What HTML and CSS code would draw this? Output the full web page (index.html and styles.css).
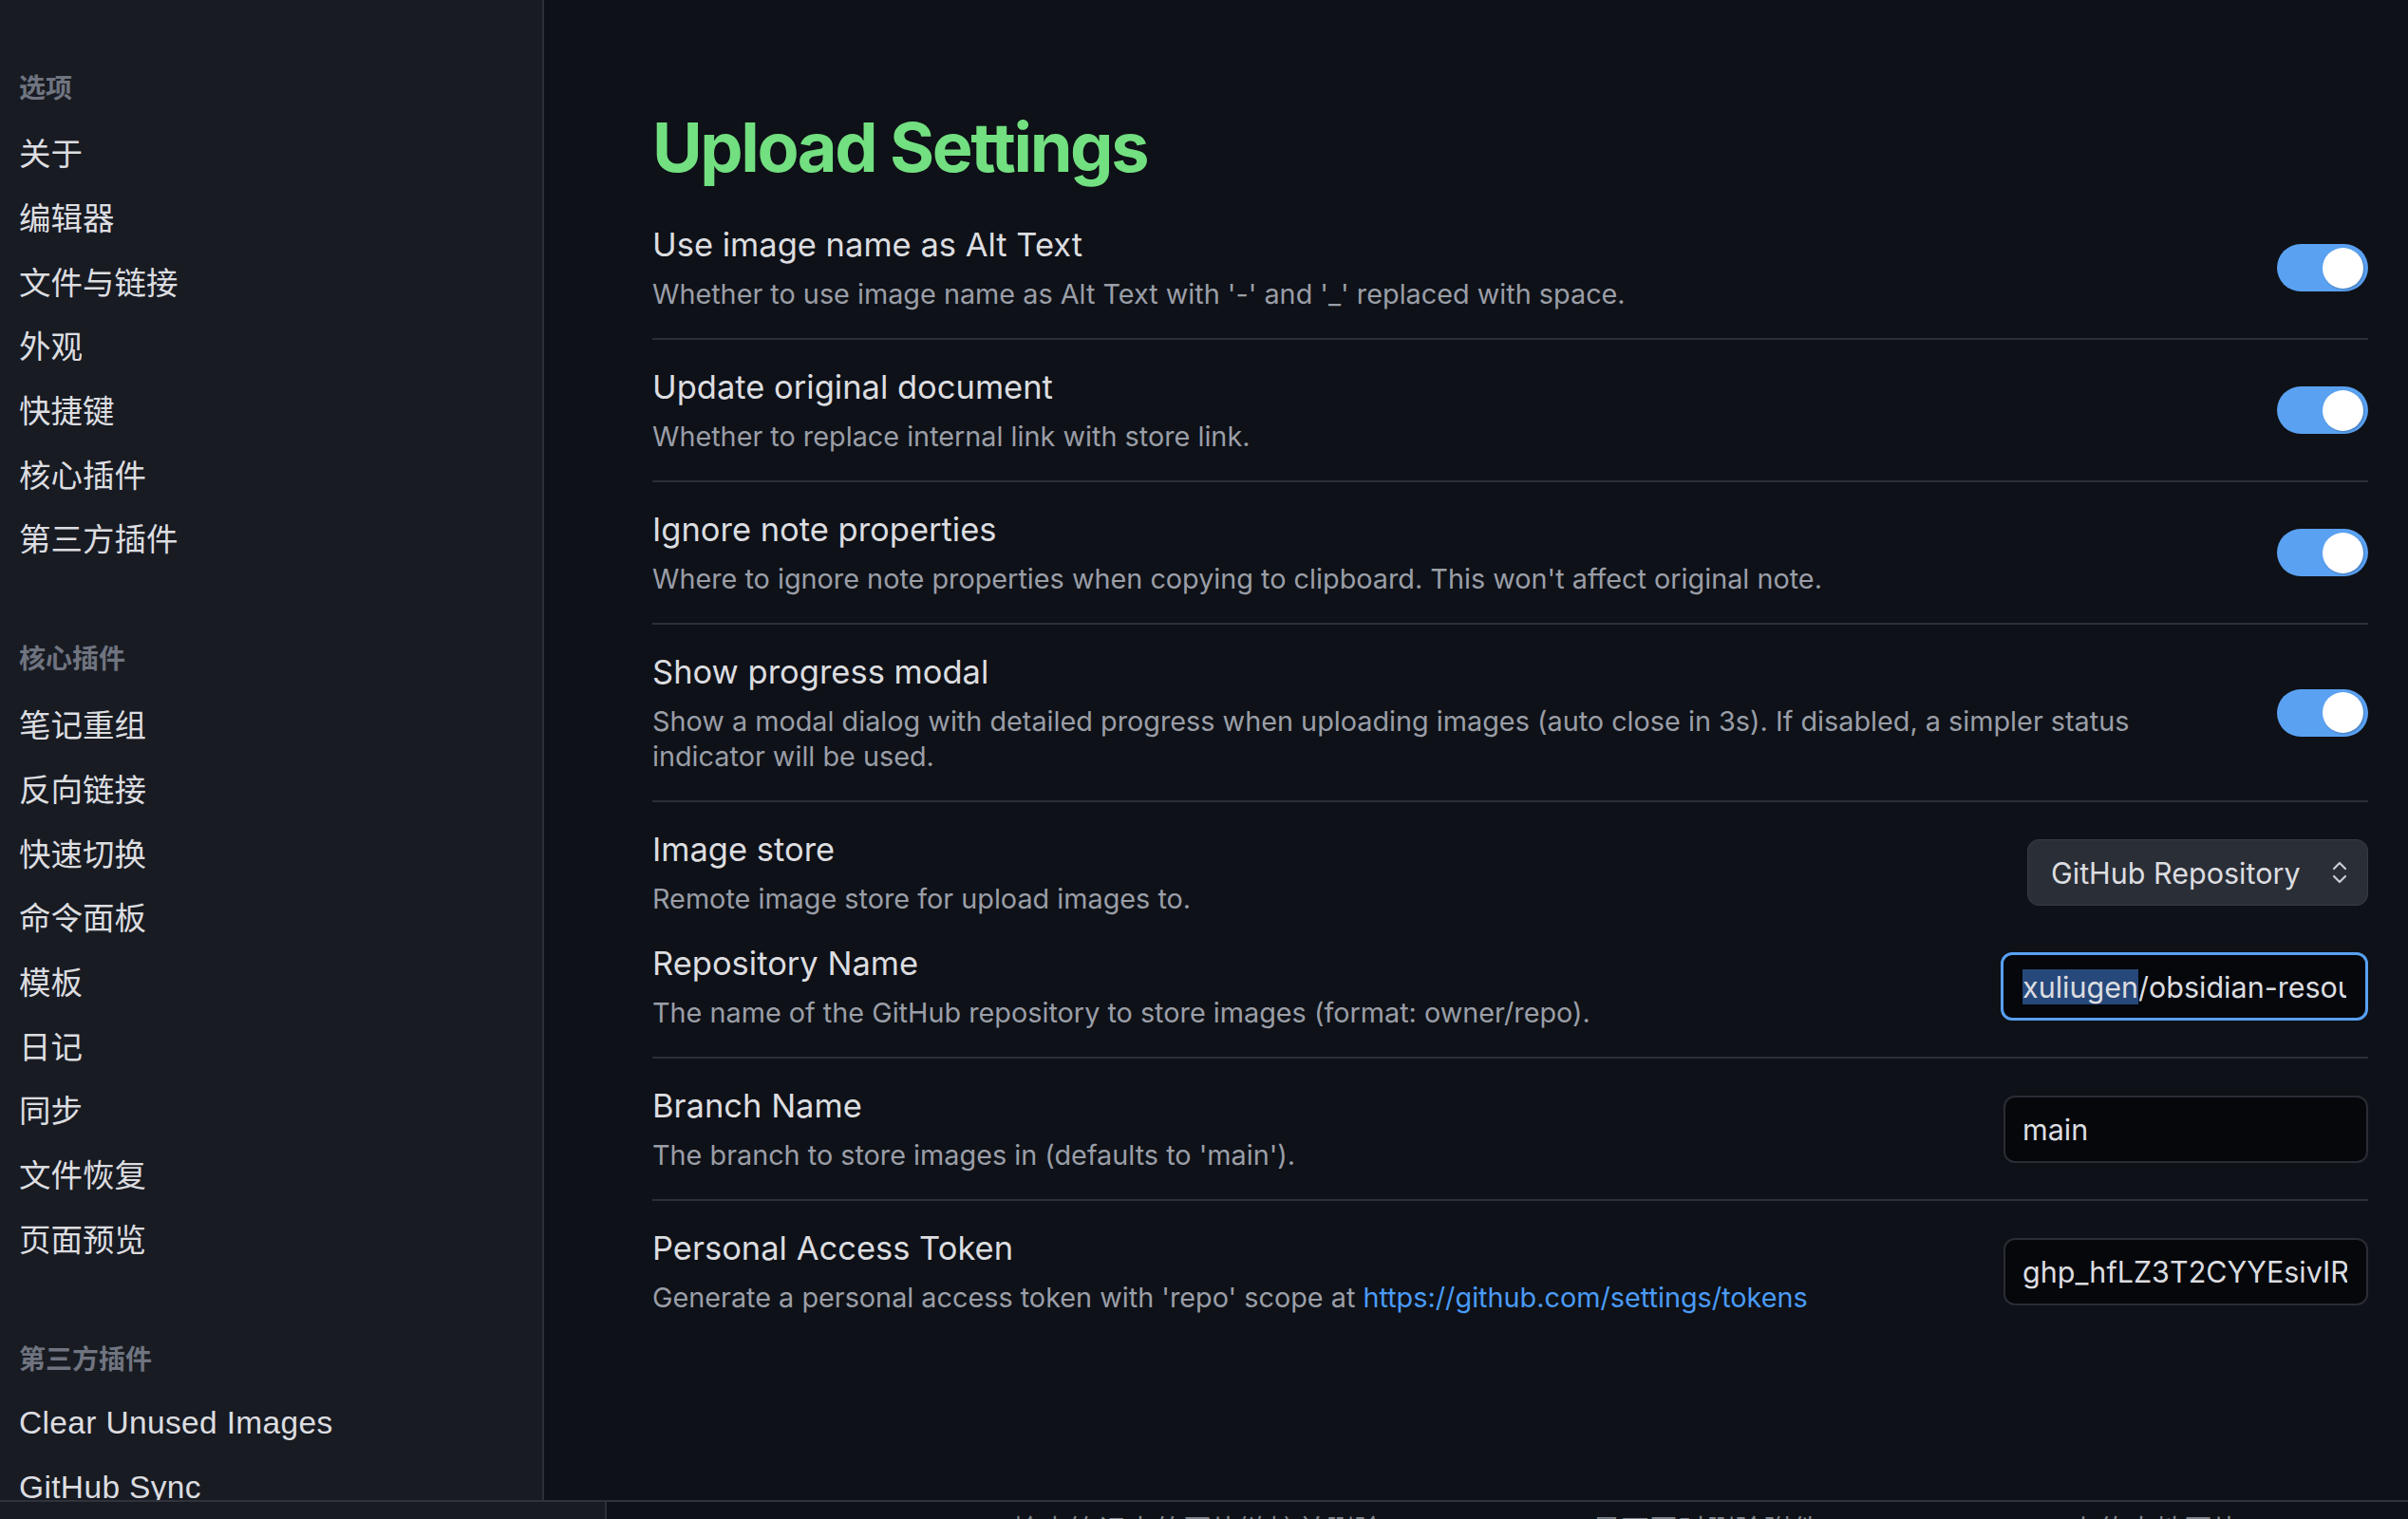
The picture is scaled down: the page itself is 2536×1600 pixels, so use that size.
FILE: index.html
```html
<!DOCTYPE html>
<html lang="zh">
<head>
<meta charset="utf-8">
<title>Upload Settings</title>
<link rel="stylesheet" href="styles.css">
</head>
<body>
<div class="app">
  <nav class="sidebar">
    <div class="group">
      <div class="group-title">选项</div>
      <div class="nav-item">关于</div>
      <div class="nav-item">编辑器</div>
      <div class="nav-item">文件与链接</div>
      <div class="nav-item">外观</div>
      <div class="nav-item">快捷键</div>
      <div class="nav-item">核心插件</div>
      <div class="nav-item">第三方插件</div>
    </div>
    <div class="group">
      <div class="group-title">核心插件</div>
      <div class="nav-item">笔记重组</div>
      <div class="nav-item">反向链接</div>
      <div class="nav-item">快速切换</div>
      <div class="nav-item">命令面板</div>
      <div class="nav-item">模板</div>
      <div class="nav-item">日记</div>
      <div class="nav-item">同步</div>
      <div class="nav-item">文件恢复</div>
      <div class="nav-item">页面预览</div>
    </div>
    <div class="group">
      <div class="group-title">第三方插件</div>
      <div class="nav-item latin">Clear Unused Images</div>
      <div class="nav-item latin">GitHub Sync</div>
    </div>
  </nav>
  <main class="content">
    <h1 class="heading">Upload Settings</h1>
    <div class="setting">
      <div class="info">
        <div class="name">Use image name as Alt Text</div>
        <div class="desc">Whether to use image name as Alt Text with '-' and '_' replaced with space.</div>
      </div>
      <div class="control"><div class="toggle"><div class="knob"></div></div></div>
    </div>
    <div class="setting bordered">
      <div class="info">
        <div class="name">Update original document</div>
        <div class="desc">Whether to replace internal link with store link.</div>
      </div>
      <div class="control"><div class="toggle"><div class="knob"></div></div></div>
    </div>
    <div class="setting bordered">
      <div class="info">
        <div class="name">Ignore note properties</div>
        <div class="desc">Where to ignore note properties when copying to clipboard. This won't affect original note.</div>
      </div>
      <div class="control"><div class="toggle"><div class="knob"></div></div></div>
    </div>
    <div class="setting bordered">
      <div class="info">
        <div class="name">Show progress modal</div>
        <div class="desc">Show a modal dialog with detailed progress when uploading images (auto close in 3s). If disabled, a simpler status indicator will be used.</div>
      </div>
      <div class="control"><div class="toggle"><div class="knob"></div></div></div>
    </div>
    <div class="setting bordered no-bottom">
      <div class="info">
        <div class="name">Image store</div>
        <div class="desc">Remote image store for upload images to.</div>
      </div>
      <div class="control">
        <div class="dropdown">
          <span>GitHub Repository</span>
          <svg class="chevrons" width="22" height="26" viewBox="0 0 22 26" fill="none" stroke="#c9ccd2" stroke-width="2.2" stroke-linecap="round" stroke-linejoin="round"><path d="M5 9 L11 3 L17 9"/><path d="M5 17 L11 23 L17 17"/></svg>
        </div>
      </div>
    </div>
    <div class="setting">
      <div class="info">
        <div class="name">Repository Name</div>
        <div class="desc">The name of the GitHub repository to store images (format: owner/repo).</div>
      </div>
      <div class="control">
        <div class="textbox focused"><span class="value"><span class="sel">xuliugen</span>/obsidian-resources</span></div>
      </div>
    </div>
    <div class="setting bordered">
      <div class="info">
        <div class="name">Branch Name</div>
        <div class="desc">The branch to store images in (defaults to 'main').</div>
      </div>
      <div class="control">
        <div class="textbox"><span class="value">main</span></div>
      </div>
    </div>
    <div class="setting bordered">
      <div class="info">
        <div class="name">Personal Access Token</div>
        <div class="desc">Generate a personal access token with 'repo' scope at <a class="link" href="#">https://github.com/settings/tokens</a></div>
      </div>
      <div class="control">
        <div class="textbox"><span class="value">ghp_hfLZ3T2CYYEsivIRq8Xw2mPz</span></div>
      </div>
    </div>
  </main>
</div>
<footer class="statusbar">
  <div class="status-left"></div>
  <div class="status-right">
    <span class="status-text s1">检查笔记中的图片链接并删除</span>
    <span class="status-text s2">是否同时删除附件</span>
    <span class="status-text s3">上传本地图片</span>
  </div>
</footer>
</body>
</html>
```

FILE: styles.css
```css
* {
  box-sizing: border-box;
}

html, body {
  margin: 0;
  padding: 0;
  height: 1600px;
  overflow: hidden;
  background: #0e1117;
  font-family: "Inter", "Noto Sans CJK SC", "Noto Sans", sans-serif;
  color: #dcdde0;
}

.app {
  display: flex;
  height: 1580px;
}

.sidebar {
  width: 573px;
  flex: 0 0 573px;
  background: #181b22;
  border-right: 2px solid #2c2f36;
  padding: 55px 0 0 20px;
  overflow: hidden;
  font-family: "Liberation Sans", "Noto Sans CJK SC", sans-serif;
}

.group + .group {
  margin-top: 57px;
}

.group-title {
  height: 71px;
  display: flex;
  align-items: center;
  font-size: 28px;
  font-weight: 700;
  color: #6f7480;
}

.nav-item {
  height: 67.7px;
  display: flex;
  align-items: center;
  font-size: 33.5px;
  color: #dcdde0;
  white-space: nowrap;
}

.nav-item.latin {
  letter-spacing: 0.35px;
}

.content {
  flex: 1;
  padding: 112px 42px 0 114px;
  overflow: hidden;
}

.heading {
  margin: 0 0 10px 0;
  font-size: 72px;
  line-height: 86px;
  font-weight: 700;
  color: #72df80;
  letter-spacing: -2.4px;
}

.setting {
  display: flex;
  align-items: center;
  gap: 64px;
  padding: 28px 0;
}

.setting.bordered {
  border-top: 2px solid #2c2f36;
}

.setting.no-bottom {
  padding-bottom: 0;
}

.info {
  flex: 1;
  min-width: 0;
}

.name {
  font-size: 34.5px;
  line-height: 44px;
  color: #dcdde0;
}

.desc {
  margin-top: 11px;
  font-size: 28.8px;
  line-height: 37px;
  color: #9a9ea7;
}

.link {
  color: #4a9bf6;
  text-decoration: none;
}

.control {
  flex: 0 0 auto;
  display: flex;
  justify-content: flex-end;
  align-items: center;
}

.toggle {
  width: 96px;
  height: 50px;
  border-radius: 25px;
  background: #5aa1f2;
  display: flex;
  align-items: center;
  justify-content: flex-end;
  padding-right: 5px;
}

.knob {
  width: 43px;
  height: 43px;
  border-radius: 50%;
  background: #ffffff;
  box-shadow: 1px 1px 2px rgba(0, 0, 0, 0.25);
}

.dropdown {
  width: 359px;
  height: 70px;
  border-radius: 12px;
  background: #2a2e36;
  border: 1px solid #363a43;
  display: flex;
  align-items: center;
  justify-content: space-between;
  padding: 0 18px 0 24px;
  font-size: 30.5px;
  color: #dcdde0;
}

.chevrons {
  display: block;
}

.textbox {
  width: 384px;
  height: 71px;
  border-radius: 12px;
  background: #05070b;
  border: 2px solid #2a2d35;
  padding: 0 20px 0 18px;
  display: flex;
  align-items: center;
  font-size: 30.5px;
  color: #dcdde0;
}

.textbox.focused {
  width: 387px;
  height: 72px;
  border: 3px solid #58a0f2;
  padding-left: 20px;
}

.value {
  flex: 1;
  min-width: 0;
  white-space: nowrap;
  overflow: hidden;
}

.sel {
  background: #27487a;
  padding: 2px 0;
}

.statusbar {
  height: 20px;
  border-top: 2px solid #30333b;
  display: flex;
  overflow: hidden;
}

.status-left {
  width: 639px;
  flex: 0 0 639px;
  background: #181b22;
  border-right: 2px solid #2c2f36;
}

.status-right {
  flex: 1;
  position: relative;
  background: #0e1117;
  overflow: hidden;
}

.status-text {
  position: absolute;
  top: 9px;
  font-size: 30px;
  line-height: 40px;
  color: #7d8189;
  white-space: nowrap;
}

.s1 { left: 427px; }
.s2 { left: 1038px; }
.s3 { left: 1541px; }
```
